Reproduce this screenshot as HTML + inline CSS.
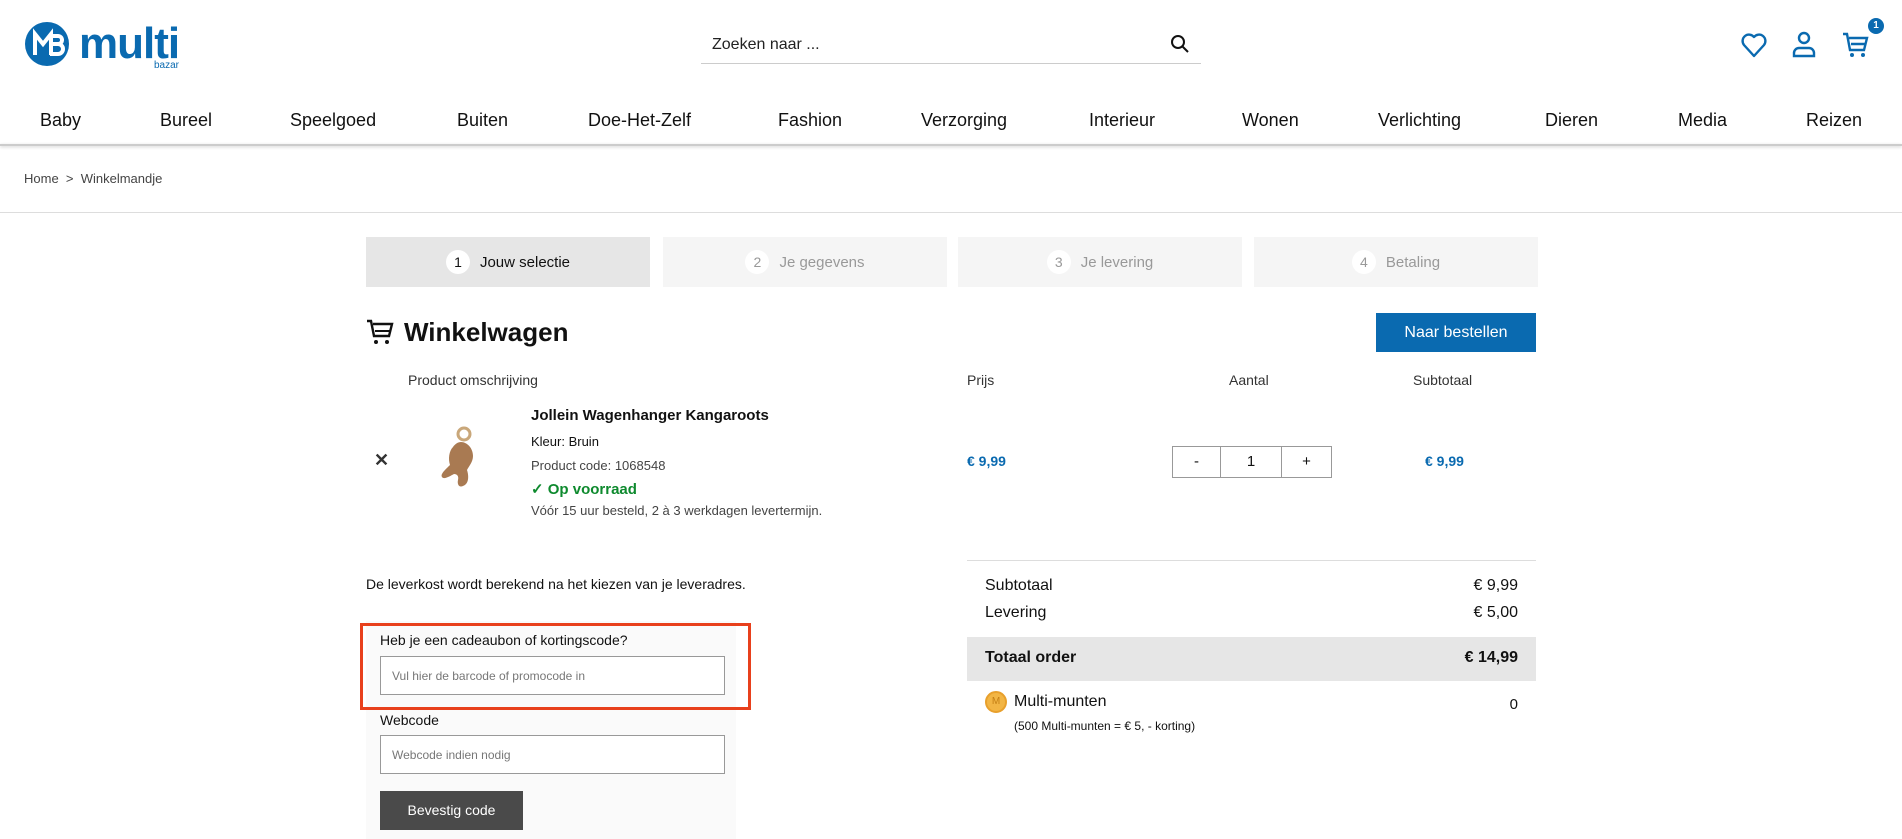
<!DOCTYPE html>
<html><head><meta charset="utf-8"><style>
*{margin:0;padding:0;box-sizing:border-box}
body{width:1902px;height:839px;overflow:hidden;background:#fff;font-family:"Liberation Sans",sans-serif;color:#111;position:relative}
.a{position:absolute;white-space:nowrap}
.nav span{position:absolute;top:110px;font-size:18px;color:#111}
.step{position:absolute;top:237px;height:50px;width:284px;display:flex;align-items:center;justify-content:center;font-size:15px;color:#999;background:#f5f5f5}
.step b{display:inline-block;width:24px;height:24px;border-radius:50%;background:#fff;text-align:center;line-height:24px;font-weight:normal;margin-right:10px;font-size:14px}
.inp{position:absolute;border:1px solid #999;background:#fff;font-size:12px;color:#777;padding-left:11px;display:flex;align-items:center}
</style></head><body>
<!-- logo -->
<svg class="a" style="left:24px;top:18px" width="170" height="54" viewBox="0 0 170 54">
<circle cx="23" cy="26" r="22" fill="#0a6ab0"/>
<path d="M11 37V16l8 10 8-10v21M26 18h8a4 4 0 0 1 0 8h-6h6a5 5 0 0 1 0 10h-8" stroke="#fff" stroke-width="4" fill="none"/>
<text x="55" y="40" font-family="Liberation Sans" font-weight="bold" font-size="44" fill="#0a6ab0" letter-spacing="-1">multi</text>
<text x="130" y="50" font-family="Liberation Sans" font-size="10" fill="#0a6ab0">bazar</text>
</svg>
<!-- search -->
<div class="a" style="left:712px;top:36px;font-size:16px;color:#222">Zoeken naar ...</div>
<div class="a" style="left:701px;top:63px;width:500px;height:1px;background:#ccc"></div>
<svg class="a" style="left:1170px;top:34px" width="20" height="20" viewBox="0 0 20 20"><circle cx="8" cy="8" r="6" stroke="#111" stroke-width="2" fill="none"/><path d="M12.5 12.5L18 18" stroke="#111" stroke-width="2"/></svg>
<!-- icons -->
<svg class="a" style="left:1740px;top:29px" width="140" height="32" viewBox="0 0 140 32">
<path d="M14 27L4 16a6 6 0 0 1 10-8a6 6 0 0 1 10 8z" stroke="#0a6ab0" stroke-width="2.4" fill="none" stroke-linejoin="round"/>
<circle cx="64" cy="9" r="5" stroke="#0a6ab0" stroke-width="2.4" fill="none"/>
<path d="M54 27v-3a5 5 0 0 1 5-5h10a5 5 0 0 1 5 5v3z" stroke="#0a6ab0" stroke-width="2.4" fill="none"/>
<path d="M103 5h4l3 16h14l3-12H109M111 15h14" stroke="#0a6ab0" stroke-width="2.4" fill="none"/>
<circle cx="112" cy="26" r="2" fill="#0a6ab0"/><circle cx="123" cy="26" r="2" fill="#0a6ab0"/>
</svg>
<div class="a" style="left:1868px;top:18px;width:16px;height:16px;border-radius:50%;background:#0a6ab0;color:#fff;font-size:10px;font-weight:bold;text-align:center;line-height:16px">1</div>
<!-- nav -->
<div class="nav">
<span style="left:40px">Baby</span><span style="left:160px">Bureel</span><span style="left:290px">Speelgoed</span><span style="left:457px">Buiten</span><span style="left:588px">Doe-Het-Zelf</span><span style="left:778px">Fashion</span><span style="left:921px">Verzorging</span><span style="left:1089px">Interieur</span><span style="left:1242px">Wonen</span><span style="left:1378px">Verlichting</span><span style="left:1545px">Dieren</span><span style="left:1678px">Media</span><span style="left:1806px">Reizen</span>
</div>
<div class="a" style="left:0;top:144px;width:1902px;height:2px;background:#ccc;box-shadow:0 1px 3px rgba(0,0,0,.2)"></div>
<div class="a" style="left:24px;top:171px;font-size:13px;color:#444">Home &nbsp;&gt;&nbsp; Winkelmandje</div>
<div class="a" style="left:0;top:212px;width:1902px;height:1px;background:#ddd"></div>
<!-- steps -->
<div class="step" style="left:366px;background:#e6e6e6;color:#111"><b>1</b>Jouw selectie</div>
<div class="step" style="left:663px"><b>2</b>Je gegevens</div>
<div class="step" style="left:958px"><b>3</b>Je levering</div>
<div class="step" style="left:1254px"><b>4</b>Betaling</div>
<!-- heading -->
<svg class="a" style="left:366px;top:319px" width="28" height="26" viewBox="0 0 28 26"><path d="M1 2h4l3 15h15l3-12H7" stroke="#111" stroke-width="2.4" fill="none"/><path d="M9 12h15" stroke="#111" stroke-width="2"/><circle cx="10" cy="23" r="2" fill="#111"/><circle cx="21" cy="23" r="2" fill="#111"/></svg>
<div class="a" style="left:404px;top:317px;font-size:26px;font-weight:bold">Winkelwagen</div>
<div class="a" style="left:1376px;top:313px;width:160px;height:39px;background:#0a6ab0;color:#fff;font-size:16px;text-align:center;line-height:39px">Naar bestellen</div>
<!-- table header -->
<div class="a" style="left:408px;top:372px;font-size:14px;color:#333">Product omschrijving</div>
<div class="a" style="left:967px;top:372px;font-size:14px;color:#333">Prijs</div>
<div class="a" style="left:1229px;top:372px;font-size:14px;color:#333">Aantal</div>
<div class="a" style="left:1413px;top:372px;font-size:14px;color:#333">Subtotaal</div>
<!-- row -->
<div class="a" style="left:374px;top:450px;font-size:18px;color:#333;font-weight:bold">✕</div>
<svg class="a" style="left:431px;top:425px" width="60" height="72" viewBox="0 0 60 72"><circle cx="33" cy="9" r="6" stroke="#c9a77a" stroke-width="3" fill="none"/><path d="M30 17c6 0 12 6 12 14c0 6-4 10-6 14c2 6 2 14-4 16c-4 2-6-2-5-6c1-4-1-6-4-6c-4 2-10 6-12 3c-2-3 4-8 8-12c-2-6-1-14 3-18c2-3 5-5 8-5z" fill="#a97a52"/></svg>
<div class="a" style="left:531px;top:407px;font-size:15px;font-weight:bold">Jollein Wagenhanger Kangaroots</div>
<div class="a" style="left:531px;top:434px;font-size:13px">Kleur: Bruin</div>
<div class="a" style="left:531px;top:458px;font-size:13px;color:#444">Product code: 1068548</div>
<div class="a" style="left:531px;top:480px;font-size:15px;font-weight:bold;color:#0e8a2e">✓ Op voorraad</div>
<div class="a" style="left:531px;top:503px;font-size:13px;color:#444">Vóór 15 uur besteld, 2 à 3 werkdagen levertermijn.</div>
<div class="a" style="left:967px;top:453px;font-size:14px;font-weight:bold;color:#0a6ab0">€ 9,99</div>
<div class="a" style="left:1172px;top:446px;width:160px;height:32px;border:1px solid #999;display:flex;font-size:15px">
<div style="width:48px;border-right:1px solid #999;text-align:center;line-height:30px">-</div>
<div style="width:61px;border-right:1px solid #999;text-align:center;line-height:30px">1</div>
<div style="flex:1;text-align:center;line-height:30px">+</div></div>
<div class="a" style="left:1425px;top:453px;font-size:14px;font-weight:bold;color:#0a6ab0">€ 9,99</div>
<!-- summary -->
<div class="a" style="left:967px;top:560px;width:569px;height:1px;background:#ddd"></div>
<div class="a" style="left:985px;top:577px;font-size:16px">Subtotaal</div>
<div class="a" style="right:384px;top:577px;font-size:16px">€ 9,99</div>
<div class="a" style="left:985px;top:604px;font-size:16px">Levering</div>
<div class="a" style="right:384px;top:604px;font-size:16px">€ 5,00</div>
<div class="a" style="left:967px;top:637px;width:569px;height:44px;background:#e6e6e6"></div>
<div class="a" style="left:985px;top:649px;font-size:16px;font-weight:bold">Totaal order</div>
<div class="a" style="right:384px;top:649px;font-size:16px;font-weight:bold">€ 14,99</div>
<div class="a" style="left:985px;top:691px;width:22px;height:22px;border-radius:50%;background:#f2b544;border:2px solid #e8a02c;color:#c47f14;font-size:10px;text-align:center;line-height:18px">M</div>
<div class="a" style="left:1014px;top:693px;font-size:16px">Multi-munten</div>
<div class="a" style="right:384px;top:696px;font-size:15px">0</div>
<div class="a" style="left:1014px;top:719px;font-size:12px">(500 Multi-munten = € 5, - korting)</div>
<!-- left bottom -->
<div class="a" style="left:366px;top:576px;font-size:14px;color:#111">De leverkost wordt berekend na het kiezen van je leveradres.</div>
<div class="a" style="left:366px;top:621px;width:370px;height:218px;background:#fafafa"></div>
<div class="a" style="left:360px;top:623px;width:391px;height:87px;border:3px solid #e8401c"></div>
<div class="a" style="left:380px;top:632px;font-size:14px">Heb je een cadeaubon of kortingscode?</div>
<div class="inp" style="left:380px;top:656px;width:345px;height:39px">Vul hier de barcode of promocode in</div>
<div class="a" style="left:380px;top:712px;font-size:14px">Webcode</div>
<div class="inp" style="left:380px;top:735px;width:345px;height:39px">Webcode indien nodig</div>
<div class="a" style="left:380px;top:791px;width:143px;height:39px;background:#4a4a4a;color:#fff;font-size:14px;text-align:center;line-height:39px">Bevestig code</div>
</body></html>
